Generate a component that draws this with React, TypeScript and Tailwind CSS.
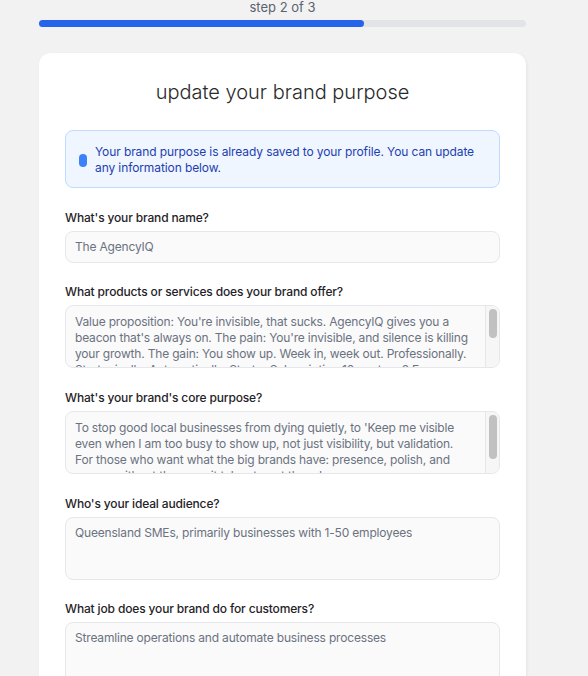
import React from "react";

const font = "font-['Inter','Open_Sans',sans-serif]";

function Label({ children }: { children: React.ReactNode }) {
  return (
    <div className="mb-[5px] text-[12px] leading-4 font-medium tracking-[-0.15px] text-[#1f2328]">{children}</div>
  );
}

function ScrollArea({ lines, thumb }: { lines: string[]; thumb: number }) {
  return (
    <div className="flex h-[63px] overflow-hidden rounded-lg border border-[#e5e7eb] bg-[#fafafa]">
      <div className="flex-1 overflow-hidden px-[9px] pt-[8px] text-[12px] leading-4 tracking-[-0.18px] text-[#6b7280]">
        {lines.map((l, i) => (
          <div key={i} className="whitespace-nowrap">{l}</div>
        ))}
      </div>
      <div className="flex w-[14px] justify-center border-l border-[#e5e7eb] bg-[#f6f6f6] pt-[3px]">
        <div className="w-[8px] rounded-full bg-[#c1c1c1]" style={{ height: thumb }} />
      </div>
    </div>
  );
}

function PlainArea({ text, tall }: { text: string; tall?: boolean }) {
  return (
    <div
      className={`rounded-lg border border-[#e5e7eb] bg-[#fafafa] px-[9px] pt-[7px] text-[12px] leading-4 tracking-[-0.18px] text-[#6b7280] ${tall ? "h-[70px]" : "h-[63px]"}`}
    >
      {text}
    </div>
  );
}

export default function App() {
  return (
    <div className={`min-h-screen bg-[#f2f2f2] ${font}`}>
      <div className="ml-[39px] w-[487px]">
        <div className="text-center text-[13px] leading-[14px] text-[#5b6270]">step 2 of 3</div>
        <div className="mt-[6px] h-[7px] w-full rounded-full bg-[#e3e4e8]">
          <div className="h-full w-[325px] rounded-full bg-[#2563eb]" />
        </div>
        <div className="mt-[26px] rounded-xl bg-white px-[26px] pt-[25px] pb-6 shadow-[1px_1px_3px_rgba(0,0,0,0.06)]">
          <h1 className="text-center text-[20px] leading-7 font-light text-[#2a2a2a]">
            update your brand purpose
          </h1>
          <div className="mt-[24px] flex items-center gap-[8px] rounded-lg border border-[#bfdbfe] bg-[#eff6ff] pt-[13px] pb-[11px] pl-[13px] pr-3">
            <div className="h-[13px] w-[8px] shrink-0 rounded-full bg-[#3b82f6]" />
            <div className="text-[12px] leading-4 tracking-[-0.1px] text-[#1e40af]">
              Your brand purpose is already saved to your profile. You can update
              <br />
              any information below.
            </div>
          </div>

          <div className="mt-[22px]">
            <Label>What's your brand name?</Label>
            <div className="flex h-[32px] items-center rounded-lg border border-[#e5e7eb] bg-[#fafafa] px-[9px] text-[12px] tracking-[-0.18px] text-[#6b7280]">
              The AgencyIQ
            </div>
          </div>

          <div className="mt-[21px]">
            <Label>What products or services does your brand offer?</Label>
            <ScrollArea
              thumb={29}
              lines={[
                "Value proposition: You're invisible, that sucks. AgencyIQ gives you a",
                "beacon that's always on. The pain: You're invisible, and silence is killing",
                "your growth. The gain: You show up. Week in, week out. Professionally.",
                "Strategically. Automatically. Starter Subscription 10 posts + 2 Free:",
              ]}
            />
          </div>

          <div className="mt-[22px]">
            <Label>What's your brand's core purpose?</Label>
            <ScrollArea
              thumb={44}
              lines={[
                "To stop good local businesses from dying quietly, to 'Keep me visible",
                "even when I am too busy to show up, not just visibility, but validation.",
                "For those who want what the big brands have: presence, polish, and",
                "power, without the army it takes to get there.'",
              ]}
            />
          </div>

          <div className="mt-[22px]">
            <Label>Who's your ideal audience?</Label>
            <PlainArea text="Queensland SMEs, primarily businesses with 1-50 employees" />
          </div>

          <div className="mt-[21px]">
            <Label>What job does your brand do for customers?</Label>
            <PlainArea text="Streamline operations and automate business processes" tall />
          </div>
        </div>
      </div>
    </div>
  );
}
